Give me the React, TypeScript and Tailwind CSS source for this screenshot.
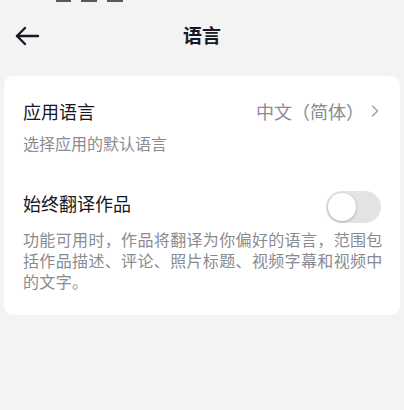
import { ChevronRight } from "lucide-react";

export default function App() {
  return (
    <div
      className="w-[404px] h-[410px] bg-[#f3f3f3] overflow-hidden"
      style={{ fontFamily: '"Noto Sans CJK SC", "Noto Sans", sans-serif' }}
    >
      {/* cut-off status strip */}
      <div className="h-[2px] flex gap-[10px] pl-[56px]">
        <div className="w-[15px] h-[2px] bg-[#5a5a5a]" />
        <div className="w-[16px] h-[2px] bg-[#5a5a5a]" />
        <div className="w-[16px] h-[2px] bg-[#5a5a5a]" />
      </div>

      <header className="h-[70px] relative flex items-center justify-center">
        <button className="absolute left-[14px] top-[23px] text-[#161823]" aria-label="Back">
          <svg width="26" height="24" viewBox="0 0 26 24" fill="none" stroke="currentColor" strokeWidth="2.4" strokeLinecap="round" strokeLinejoin="round">
            <path d="M3 11h21" />
            <path d="M11 3l-8 8 8 8" />
          </svg>
        </button>
        <h1 className="text-[19px] font-bold text-[#161823] leading-none mb-[6px]">语言</h1>
      </header>

      <div className="mx-[4px] mt-[4px] bg-white rounded-[9px] pl-[19px] pr-[19px] pt-[23px] pb-[23px]">
        <div className="flex items-center justify-between">
          <span className="text-[18px] leading-[24px] text-[#161823]">应用语言</span>
          <span className="flex items-center text-[18px] leading-[24px] text-[#8a8b91]">
            中文（简体）
            <ChevronRight size={20} strokeWidth={1.5} className="text-[#9a9ba0] ml-[1px] -mr-[4px]" />
          </span>
        </div>
        <p className="mt-[9px] text-[16px] leading-[22px] text-[#8a8b91]">选择应用的默认语言</p>

        <div className="mt-[29px] flex items-center justify-between">
          <span className="text-[18px] leading-[24px] text-[#161823]">始终翻译作品</span>
          <div className="w-[55px] h-[32px] rounded-full bg-[#e3e3e4] p-[2px] flex items-center mt-[8px]">
            <div className="w-[28px] h-[28px] rounded-full bg-white shadow-[0_1px_3px_rgba(0,0,0,0.25)]" />
          </div>
        </div>
        <p className="mt-[6px] -mr-[8px] text-[16px] leading-[21px] tracking-[0.35px] text-[#8a8b91]">
          功能可用时，作品将翻译为你偏好的语言，范围包括作品描述、评论、照片标题、视频字幕和视频中的文字。
        </p>
      </div>
    </div>
  );
}
